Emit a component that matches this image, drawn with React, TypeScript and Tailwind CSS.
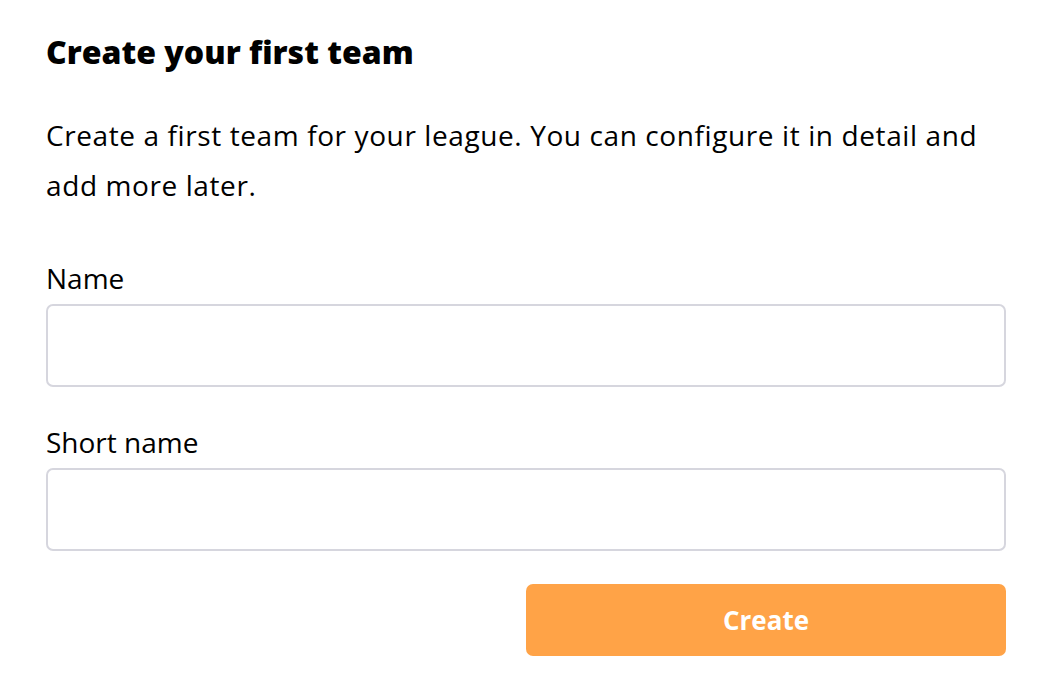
import React from 'react';

export default function App() {
  return (
    <div className="min-h-screen bg-white text-black" style={{ fontFamily: '"Open Sans", "Noto Sans", sans-serif' }}>
      <div className="w-[960px] ml-[46px] pt-[30px]">
        <h1 className="text-[32px] font-extrabold leading-[44px]">Create your first team</h1>
        <p className="mt-[36px] text-[28px] leading-[50px] tracking-[0.6px]">
          Create a first team for your league. You can configure it in detail and add more later.
        </p>

        <form className="mt-[50px] flex flex-col">
          <label className="text-[28px] leading-[36px]">Name</label>
          <input
            type="text"
            className="mt-[8px] h-[83px] w-full rounded-[7px] border-2 border-[#d6d6de] bg-white px-4 text-[28px] outline-none"
          />

          <label className="mt-[37px] text-[28px] leading-[36px]">Short name</label>
          <input
            type="text"
            className="mt-[8px] h-[83px] w-full rounded-[7px] border-2 border-[#d6d6de] bg-white px-4 text-[28px] outline-none"
          />

          <div className="mt-[33px] flex justify-end">
            <button
              type="button"
              className="h-[72px] w-[480px] rounded-[7px] bg-[#ffa347] text-[26px] font-bold text-white"
            >
              Create
            </button>
          </div>
        </form>
      </div>
    </div>
  );
}
